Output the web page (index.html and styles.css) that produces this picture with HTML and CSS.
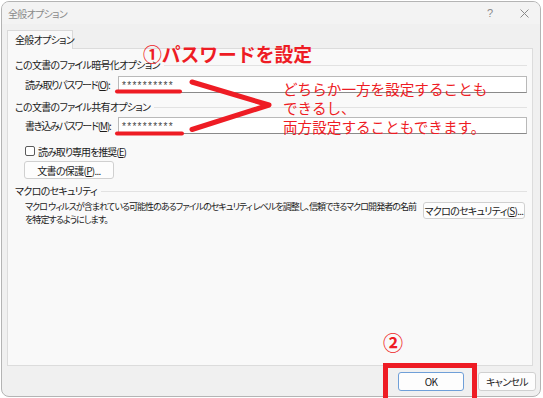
FILE: index.html
```html
<!DOCTYPE html>
<html lang="ja">
<head>
<meta charset="utf-8">
<title>全般オプション</title>
<link rel="stylesheet" href="styles.css">
</head>
<body>
<div class="stage">
  <div class="window">
    <div class="titlebar">
      <span class="title">全般オプション</span>
      <span class="tb-btns">
        <span class="help">?</span>
        <svg class="close" width="9" height="9" viewBox="0 0 9 9"><path d="M0.5 0.5L8.5 8.5M8.5 0.5L0.5 8.5" stroke="#8a8a8a" stroke-width="1" fill="none"/></svg>
      </span>
    </div>
    <div class="content">
      <div class="tab">全般オプション</div>
      <div class="panel">
        <div class="group-h">この文書のファイル暗号化オプション</div>
        <div class="field">
          <span class="label">読み取りパスワード(<u>O</u>):</span>
          <div class="input">**********</div>
        </div>
        <div class="group-h second">この文書のファイル共有オプション</div>
        <div class="field f2">
          <span class="label">書き込みパスワード(<u>M</u>):</span>
          <div class="input">**********</div>
        </div>
        <div class="check"><span class="box"></span>読み取り専用を推奨(<u>E</u>)</div>
        <div class="btn protect">文書の保護(<u>P</u>)...</div>
        <div class="group-h third">マクロのセキュリティ</div>
        <div class="macro">
          <p>マクロ ウィルスが含まれている可能性のあるファイルのセキュリティ レベルを調整し、信頼できるマクロ開発者の名前<br>を特定するようにします。</p>
          <div class="btn macro-btn">マクロのセキュリティ(<u>S</u>)...</div>
        </div>
      </div>
    </div>
    <div class="footer">
      <div class="btn ok">OK</div>
      <div class="btn cancel">キャンセル</div>
    </div>
  </div>

  <div class="note note1">①パスワードを設定</div>
  <div class="note note2">どちらか一方を設定することも<br>できるし、<br>両方設定することもできます。</div>
  <div class="note note3">②</div>
  <div class="redbox"></div>
  <svg class="marks" width="543" height="398" viewBox="0 0 543 398">
    <g stroke="#ee1c24" fill="none" stroke-linecap="round" stroke-linejoin="round">
      <path d="M117 91.5L180 91.5" stroke-width="4"/>
      <path d="M117 133.5L182 133.5" stroke-width="4"/>
      <path d="M192 82L269 105L192 129.5" stroke-width="5"/>
    </g>
  </svg>
</div>
</body>
</html>
```

FILE: styles.css
```css
* { box-sizing: border-box; }

body {
  margin: 0;
  background: #ffffff;
  font-family: "Noto Sans CJK JP", "Noto Sans", sans-serif;
  font-feature-settings: "palt";
  font-size: 10px;
  letter-spacing: -0.7px;
  color: #1b1b1b;
  white-space: nowrap;
}

u { text-decoration: underline; text-underline-offset: 1px; }

.stage {
  position: relative;
  width: 543px;
  height: 398px;
  overflow: hidden;
  padding: 1px 2px 1px 1px;
}

.window {
  width: 540px;
  height: 396px;
  border: 1px solid #b4b4b4;
  border-radius: 8px;
  background: #f0f0f0;
  display: flex;
  flex-direction: column;
  overflow: hidden;
}

.titlebar {
  height: 22px;
  flex: none;
  background: #f3f3f3;
  display: flex;
  align-items: center;
  justify-content: space-between;
  padding: 0 11px 0 6px;
  color: #8a8a8a;
}

.tb-btns {
  display: flex;
  align-items: center;
  gap: 27px;
}

.help { font-family: "Liberation Sans", sans-serif; font-size: 11px; letter-spacing: 0; }

.content {
  padding: 6px 7px 0 5px;
  flex: none;
}

.tab {
  width: 66px;
  height: 19px;
  border: 1px solid #d9d9d9;
  border-bottom: 0;
  background: #f9f9f9;
  padding-left: 7px;
  line-height: 18px;
  position: relative;
  z-index: 1;
  margin-bottom: -1px;
}

.panel {
  height: 318px;
  border: 1px solid #dcdcdc;
  background: #f9f9f9;
  padding: 9px 5px 0 7px;
}

.group-h {
  display: flex;
  align-items: center;
  height: 14px;
  line-height: 14px;
}

.group-h::after {
  content: "";
  flex: 1;
  border-top: 1px solid #e2e2e2;
  margin-left: 4px;
}

.group-h.second { margin-top: 7px; }
.group-h.third { margin-top: 5px; }

.field {
  display: flex;
  align-items: center;
  margin-top: 4px;
  padding-left: 10px;
}

.field.f2 { margin-top: 3px; }

.label { width: 93px; flex: none; letter-spacing: -1.2px; }

.input {
  flex: 1;
  height: 17px;
  background: #ffffff;
  border: 1px solid #b9b9b9;
  border-bottom-color: #8a8a8a;
  font-family: "Liberation Sans", sans-serif;
  font-size: 10px;
  letter-spacing: 1.3px;
  padding-left: 3px;
  line-height: 17px;
  color: #444;
}

.check {
  margin-top: 10px;
  padding-left: 10px;
  display: flex;
  align-items: center;
  height: 14px;
  letter-spacing: -1px;
}

.box {
  width: 10px;
  height: 10px;
  border: 1px solid #5a5a5a;
  border-radius: 2px;
  background: #ffffff;
  margin-right: 3px;
}

.btn {
  height: 18px;
  border: 1px solid #d0d0d0;
  border-radius: 3px;
  background: #fdfdfd;
  display: flex;
  align-items: center;
  justify-content: center;
}

.protect {
  width: 90px;
  margin: 3px 0 0 9px;
}

.macro {
  display: flex;
  justify-content: space-between;
  align-items: flex-start;
  margin-top: 2px;
  padding-left: 10px;
  padding-right: 2px;
}

.macro p {
  margin: 0;
  line-height: 13px;
  font-size: 9px;
  letter-spacing: -0.95px;
  flex: 1;
  min-width: 0;
}

.macro-btn {
  width: 102px;
  height: 17px;
  margin-top: 2px;
  flex: none;
}

.footer {
  flex: 1;
  display: flex;
  justify-content: flex-end;
  align-items: flex-start;
  gap: 14px;
  padding: 6px 4px 0 0;
}

.footer .btn { height: 19px; }
.ok { width: 66px; border-color: #6f9fd8; }
.cancel { width: 58px; }

.note {
  position: absolute;
  color: #ee1c24;
  font-feature-settings: normal;
  letter-spacing: 0;
}

.note1 {
  left: 143px;
  top: 43px;
  font-size: 18.8px;
  font-weight: 700;
  line-height: 22px;
}

.note2 {
  left: 283px;
  top: 79px;
  font-size: 14.6px;
  line-height: 19px;
}

.note3 {
  left: 383px;
  top: 331px;
  font-size: 20px;
  font-weight: 700;
  line-height: 24px;
}

.redbox {
  position: absolute;
  left: 383px;
  top: 363px;
  width: 94px;
  height: 45px;
  border: 5px solid #ee1c24;
}

.marks {
  position: absolute;
  left: 0;
  top: 0;
  pointer-events: none;
}
```
